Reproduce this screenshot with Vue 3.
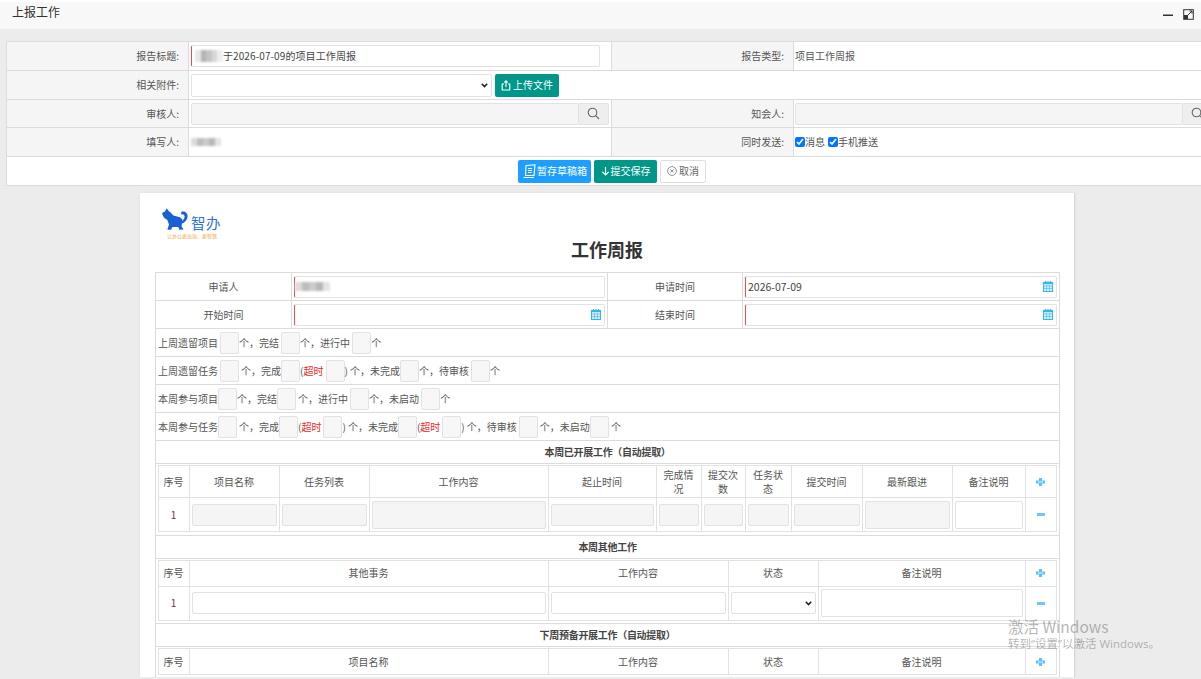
<script setup>
const countRows = [
  ['上周遗留项目 ', 0, '个，完结 ', 0, '个，进行中 ', 0, '个'],
  ['上周遗留任务 ', 0, ' 个，完成', 0, '(', 1, ' ', 0, ') 个，未完成', 0, '个，待审核 ', 0, '个'],
  ['本周参与项目', 0, '个，完结', 0, ' 个，进行中 ', 0, '个，未启动 ', 0, '个'],
  ['本周参与任务', 0, ' 个，完成', 0, '(', 1, ' ', 0, ') 个，未完成', 0, '(', 1, ' ', 0, ') 个，待审核 ', 0, ' 个，未启动', 0, ' 个']
]
const w1 = [31, 90, 90, 179, 108, 45, 44, 46, 71, 90, 73, 31]
const w2 = [31, 359, 180, 90, 207, 31]
const h1 = ['序号', '项目名称', '任务列表', '工作内容', '起止时间', '完成情况', '提交次数', '任务状态', '提交时间', '最新跟进', '备注说明']
const h2 = ['序号', '其他事务', '工作内容', '状态', '备注说明']
const h3 = ['序号', '项目名称', '工作内容', '状态', '备注说明']
const d1 = ['g', 'g', 'G', 'g', 'g', 'g', 'g', 'g', 'G', 'W']
const mosaicA = ['#e8e8e8', '#b4b4b4', '#c4c4c4', '#d8d8d8', '#eeeeee']
const mosaicB = ['#dcdcdc', '#bdbdbd', '#cbcbcb', '#b8b8b8', '#e4e4e4']
</script>

<template>
  <div class="page">
    <header class="top">
      <span class="top-title">上报工作</span>
      <span class="win">
        <svg width="10" height="3" viewBox="0 0 10 3"><rect y="0.5" width="10" height="1.5" fill="#333" /></svg>
        <svg width="11" height="11" viewBox="0 0 11 11" fill="none" stroke="#333"><rect x="0.7" y="0.7" width="9.6" height="9.6" /><path d="M5 6 9 2M6.5 2H9V4.5" /><rect x="1.5" y="6.5" width="3" height="3" fill="#333" /></svg>
      </span>
    </header>

    <table class="form">
      <colgroup><col class="c-l"><col class="c-v"><col class="c-l"><col class="c-v"></colgroup>
      <tbody>
        <tr class="r29">
          <th>报告标题:</th>
          <td>
            <div class="inp req title-inp">
              <span class="mosaic m1"><i v-for="c in mosaicA" :key="c" :style="{ background: c }"></i></span>
              <span class="title-text">于2026-07-09的项目工作周报</span>
            </div>
          </td>
          <th>报告类型:</th>
          <td class="side pad-text">项目工作周报</td>
        </tr>
        <tr class="r29">
          <th>相关附件:</th>
          <td colspan="3">
            <div class="attach">
              <select class="sel sel-file"></select>
              <button class="btn teal up">
                <svg width="10" height="11" viewBox="0 0 10 11" fill="none" stroke="#fff" stroke-width="1.1"><path d="M3 4H1.2V10H8.8V4H7M5 7V1M3.4 2.5 5 .9 6.6 2.5" /></svg>上传文件
              </button>
            </div>
          </td>
        </tr>
        <tr class="r28">
          <th>审核人:</th>
          <td>
            <div class="search">
              <div class="inp gray"></div>
              <span class="sbtn"><svg width="13" height="13" viewBox="0 0 13 13" fill="none" stroke="#666" stroke-width="1.1"><circle cx="5.5" cy="5.5" r="4.3" /><path d="M8.7 8.7 12 12" /></svg></span>
            </div>
          </td>
          <th>知会人:</th>
          <td class="side">
            <div class="search">
              <div class="inp gray"></div>
              <span class="sbtn"><svg width="13" height="13" viewBox="0 0 13 13" fill="none" stroke="#666" stroke-width="1.1"><circle cx="5.5" cy="5.5" r="4.3" /><path d="M8.7 8.7 12 12" /></svg></span>
            </div>
          </td>
        </tr>
        <tr class="r29">
          <th>填写人:</th>
          <td><span class="mosaic m2"><i v-for="c in mosaicB" :key="c" :style="{ background: c }"></i></span></td>
          <th>同时发送:</th>
          <td class="side pad-text checks">
            <label><input type="checkbox" checked>消息</label>
            <label><input type="checkbox" checked>手机推送</label>
          </td>
        </tr>
        <tr class="r29">
          <td colspan="4" class="actions-cell">
            <div class="actions">
              <button class="btn blue">
                <svg width="15" height="15" viewBox="0 0 15 15" fill="none" stroke="#fff" stroke-width="1.1"><path d="M4 1.500 13 .8 12 11.500H3.500L4 1.500ZM1.500 13.500H12M6 4.500H10M6 6.500H10M6 8.500H9.500" /></svg>暂存草稿箱
              </button>
              <button class="btn teal">
                <svg width="9" height="10" viewBox="0 0 9 10" fill="none" stroke="#fff" stroke-width="1.2"><path d="M4.5 1V9M1.3 5.8 4.5 9 7.7 5.8" /></svg>提交保存
              </button>
              <button class="btn plain">
                <svg width="10" height="10" viewBox="0 0 10 10" fill="none" stroke="#777" stroke-width=".8"><circle cx="5" cy="5" r="4.4" /><path d="M3.4 3.4 6.6 6.6M6.6 3.4 3.4 6.6" /></svg>取消
              </button>
            </div>
          </td>
        </tr>
      </tbody>
    </table>

    <main class="paper">
      <div class="logo">
        <svg width="27" height="23" viewBox="0 0 27 23" fill="#1a5fd6">
          <path d="M1 5 4 3.6 5.6.2 8.2 3.4C10 4.4 11 6 12.4 7.6L19 9.2 21.4 11.6 20.6 18.6 22.6 21.6 18.4 21.8 17.2 19H11.4L10 21.8 6.4 21.8 8 16.6 6.2 11.8C3.4 10.6 1.8 8.4 1 5Z" />
          <path d="M20.4 13.4C23.4 11.4 24.6 8.2 22.6 6.6L20 6.2 20.4 3.8C24.4 2.6 27.4 6 26.4 9.8 25.6 12.8 23.4 15 21 15.6Z" />
        </svg>
        <span class="brand-name">智办</span>
      </div>
      <div class="tagline">让办公更高效、更智慧</div>
      <h1>工作周报</h1>

      <table class="sheet">
        <colgroup><col style="width:136px"><col style="width:316px"><col style="width:135px"><col style="width:317px"></colgroup>
        <tbody>
          <tr class="s28">
            <td class="cen">申请人</td>
            <td>
              <div class="inp req">
                <span class="mosaic m3"><i v-for="c in mosaicB" :key="c" :style="{ background: c }"></i></span>
              </div>
            </td>
            <td class="cen">申请时间</td>
            <td>
              <div class="inp req date">
                <span class="date-text">2026-07-09</span>
                <svg class="cal" width="10" height="11" viewBox="0 0 10 11" fill="#cdeefd" stroke="#35b5ee"><rect x=".5" y="1.5" width="9" height="9" /><path d="M0 2.5h10M2.5 0v2M5 0v2M7.5 0v2" stroke-width="1.2" /><path d="M.5 5h9M.5 7.5h9M3.5 3.5v7M6.5 3.5v7" stroke-width=".5" /></svg>
              </div>
            </td>
          </tr>
          <tr class="s28">
            <td class="cen">开始时间</td>
            <td>
              <div class="inp req date">
                <svg class="cal" width="10" height="11" viewBox="0 0 10 11" fill="#cdeefd" stroke="#35b5ee"><rect x=".5" y="1.5" width="9" height="9" /><path d="M0 2.5h10M2.5 0v2M5 0v2M7.5 0v2" stroke-width="1.2" /><path d="M.5 5h9M.5 7.5h9M3.5 3.5v7M6.5 3.5v7" stroke-width=".5" /></svg>
              </div>
            </td>
            <td class="cen">结束时间</td>
            <td>
              <div class="inp req date">
                <svg class="cal" width="10" height="11" viewBox="0 0 10 11" fill="#cdeefd" stroke="#35b5ee"><rect x=".5" y="1.5" width="9" height="9" /><path d="M0 2.5h10M2.5 0v2M5 0v2M7.5 0v2" stroke-width="1.2" /><path d="M.5 5h9M.5 7.5h9M3.5 3.5v7M6.5 3.5v7" stroke-width=".5" /></svg>
              </div>
            </td>
          </tr>
          <tr v-for="(row, i) in countRows" :key="i" class="s28">
            <td colspan="4" class="count-cell">
              <div class="count">
                <template v-for="(seg, j) in row" :key="j">
                  <span v-if="seg === 0" class="box"></span>
                  <span v-else-if="seg === 1" class="red">超时</span>
                  <span v-else>{{ seg }}</span>
                </template>
              </div>
            </td>
          </tr>

          <tr class="s23"><td colspan="4" class="sec">本周已开展工作（自动提取）</td></tr>
          <tr>
            <td colspan="4" class="nest-cell">
              <table class="nest">
                <colgroup><col v-for="(w, i) in w1" :key="i" :style="{ width: w + 'px' }"></colgroup>
                <tbody>
                  <tr class="h32">
                    <td v-for="h in h1" :key="h" class="head">{{ h }}</td>
                    <td class="ico"><svg width="9" height="8" viewBox="0 0 9 8"><path d="M3 0h3v2.5h3v3H6V8H3V5.500H0v-3h3z" fill="#5cc0ff" /><rect x="2" y="3.300" width="5" height="1.400" fill="#bfe6ff" /></svg></td>
                  </tr>
                  <tr class="h34">
                    <td class="num">1</td>
                    <td v-for="(k, i) in d1" :key="i" class="fld">
                      <div :class="['f', k === 'W' ? 'tall white' : k === 'G' ? 'tall gray' : 'gray']"></div>
                    </td>
                    <td class="ico"><svg width="8" height="3" viewBox="0 0 8 3"><rect width="8" height="3" fill="#6cc6ff" /></svg></td>
                  </tr>
                </tbody>
              </table>
            </td>
          </tr>

          <tr class="s23"><td colspan="4" class="sec">本周其他工作</td></tr>
          <tr>
            <td colspan="4" class="nest-cell">
              <table class="nest">
                <colgroup><col v-for="(w, i) in w2" :key="i" :style="{ width: w + 'px' }"></colgroup>
                <tbody>
                  <tr class="h25">
                    <td v-for="h in h2" :key="h" class="head">{{ h }}</td>
                    <td class="ico"><svg width="9" height="8" viewBox="0 0 9 8"><path d="M3 0h3v2.5h3v3H6V8H3V5.500H0v-3h3z" fill="#5cc0ff" /><rect x="2" y="3.300" width="5" height="1.400" fill="#bfe6ff" /></svg></td>
                  </tr>
                  <tr class="h34">
                    <td class="num">1</td>
                    <td class="fld"><div class="f white"></div></td>
                    <td class="fld"><div class="f white"></div></td>
                    <td class="fld"><select class="sel f"></select></td>
                    <td class="fld"><div class="f tall white"></div></td>
                    <td class="ico"><svg width="8" height="3" viewBox="0 0 8 3"><rect width="8" height="3" fill="#6cc6ff" /></svg></td>
                  </tr>
                </tbody>
              </table>
            </td>
          </tr>

          <tr class="s23"><td colspan="4" class="sec">下周预备开展工作（自动提取）</td></tr>
          <tr>
            <td colspan="4" class="nest-cell">
              <table class="nest">
                <colgroup><col v-for="(w, i) in w2" :key="i" :style="{ width: w + 'px' }"></colgroup>
                <tbody>
                  <tr class="h25">
                    <td v-for="h in h3" :key="h" class="head">{{ h }}</td>
                    <td class="ico"><svg width="9" height="8" viewBox="0 0 9 8"><path d="M3 0h3v2.5h3v3H6V8H3V5.500H0v-3h3z" fill="#5cc0ff" /><rect x="2" y="3.300" width="5" height="1.400" fill="#bfe6ff" /></svg></td>
                  </tr>
                </tbody>
              </table>
            </td>
          </tr>
        </tbody>
      </table>
    </main>

    <div class="watermark">
      <div class="wm1">激活 Windows</div>
      <div class="wm2">转到“设置”以激活 Windows。</div>
    </div>
  </div>
</template>

<style>
html, body { margin: 0; background: #ececec; overflow: hidden; }
</style>

<style scoped>
.page {
  position: relative;
  width: 1201px;
  height: 677px;
  overflow: hidden;
  background: #ececec;
  font: 10px/14px "Noto Sans CJK SC", "Noto Sans", sans-serif;
  color: #555;
}
.top {
  height: 27px;
  border-top: 2px solid #fff;
  background: #f8f8f8;
  display: flex;
  justify-content: space-between;
  padding: 0 7px 0 12px;
}
.top-title { font-size: 12px; line-height: 19px; color: #333; }
.win { display: flex; align-items: flex-start; gap: 10px; padding-top: 7px; }
.win svg:first-child { margin-top: 5px; }

table { border-collapse: collapse; table-layout: fixed; }
td, th { padding: 0; box-sizing: border-box; }

.form {
  margin: 12px 0 0 6px;
  width: 1210px;
  background: #fff;
  border: 1px solid #dcdcdc;
}
.form td, .form th { border: 1px solid #dcdcdc; }
.c-l { width: 182px; }
.c-v { width: 423px; }
.r29 { height: 29px; }
.r28 { height: 28px; }
.form th {
  background: #f5f5f5;
  font-weight: 400;
  text-align: right;
  padding-right: 9px;
}
.form td { padding-left: 2px; padding-right: 2px; }
.form td.side { padding-left: 1px; }

.inp {
  box-sizing: border-box;
  height: 22px;
  border: 1px solid #e2e2e2;
  border-radius: 2px;
  background: #fff;
  display: flex;
  align-items: center;
  padding-left: 3px;
  color: #444;
}
.req { border-left: 1px solid #f0494f; }
.title-inp { width: 409px; }
.title-text { letter-spacing: .1px; }
.gray { background: #f5f5f5; }
.date { justify-content: space-between; padding-right: 3px; }
.date-text { font-size: 10.500px; margin-left: -1px; }
.cal { margin-left: auto; }

.mosaic { display: inline-flex; filter: blur(1.2px); }
.mosaic i { display: block; height: 9px; }
.m1 i { width: 5.600px; height: 12px; }
.m2 i { width: 6px; height: 8px; }
.m3 { margin-left: -3px; }
.m3 i { width: 7px; height: 9px; }

.attach { display: flex; gap: 3px; align-items: center; }
.sel {
  box-sizing: border-box;
  height: 23px;
  border: 1px solid #e2e2e2;
  border-radius: 2px;
  font: inherit;
  appearance: none;
  background: #fff url("data:image/svg+xml,%3Csvg xmlns='http://www.w3.org/2000/svg' width='7' height='5' viewBox='0 0 7 5'%3E%3Cpath d='M.8.8 3.500 3.500 6.200.8' fill='none' stroke='%23222' stroke-width='1.600'/%3E%3C/svg%3E") no-repeat right 3px center;
}
.sel-file { width: 301px; }

.btn {
  height: 23px;
  border: 0;
  border-radius: 2px;
  font: inherit;
  display: inline-flex;
  align-items: center;
  justify-content: center;
  gap: 1px;
  padding: 0;
  color: #fff;
}
.teal { background: #009688; width: 63px; }
.up { width: 64px; gap: 2px; }
.blue { background: #1e9fff; width: 73px; gap: 0; }
.plain { background: #fff; border: 1px solid #dedede; color: #666; width: 46px; gap: 2px; }
.actions { display: flex; gap: 3px; box-sizing: border-box; padding-left: 509px; }
.actions-cell { background: #fff; }

.search { display: flex; width: 418px; height: 22px; }
.search .inp { width: 388px; flex: none; }
.sbtn {
  flex: none;
  width: 30px;
  box-sizing: border-box;
  border: 1px solid #e2e2e2;
  border-left: 0;
  background: #eee;
  display: flex;
  align-items: center;
  justify-content: center;
  border-radius: 0 2px 2px 0;
}

.checks label { display: inline-flex; align-items: center; margin-right: 3px; }
.checks input { width: 10px; height: 10px; margin: 0; }

.paper {
  margin: 7px 0 0 140px;
  width: 935px;
  height: 600px;
  box-sizing: border-box;
  background: #fff;
  border-right: 1px solid #d6d6d6;
  box-shadow: 0 0 3px rgba(0, 0, 0, .06);
  padding: 16px 0 0 15px;
}
.logo { display: flex; align-items: flex-end; gap: 3px; margin-left: 6px; height: 22px; }
.brand-name { font-size: 14.500px; line-height: 16px; color: #2f74d8; letter-spacing: .5px; }
.tagline { font-size: 5px; line-height: 5px; color: #f5a83b; margin: 2px 0 0 12px; white-space: nowrap; }
h1 {
  margin: 0 0 12px;
  font-size: 18px;
  line-height: 22px;
  font-weight: 700;
  text-align: center;
  color: #333;
  width: 904px;
}

.sheet { width: 904px; border: 1px solid #dcdcdc; }
.sheet > tbody > tr > td { border: 1px solid #dcdcdc; }
.s28 { height: 28px; }
.s23 { height: 23px; }
.cen { text-align: center; }
.sheet .inp { margin: 0 2px; }
.count-cell { padding-left: 2px; }
.count { display: flex; align-items: center; white-space: pre; word-spacing: -.2px; }
.box {
  box-sizing: border-box;
  width: 19px;
  height: 22px;
  border: 1px solid #e2e2e2;
  border-radius: 2px;
  background: #f7f7f7;
  flex: none;
}
.red { color: #ee2b2b; }
.sec { text-align: center; font-weight: 700; color: #444; letter-spacing: -.3px; }
.nest-cell { padding: 1px 1.500px 2.500px; }
.nest { width: 898px; }
.nest td { border: 1px solid #e2e2e2; text-align: center; }
.h32 { height: 32px; }
.h34 { height: 34px; }
.h25 { height: 26px; }
.head { padding: 0 5px; line-height: 14px; }
.num { color: #7b2a55; }
.fld { padding: 0 2px; }
.f {
  box-sizing: border-box;
  display: block;
  width: 100%;
  height: 22px;
  border: 1px solid #e2e2e2;
  border-radius: 2px;
  margin: 0 auto;
}
.f.tall { height: 28px; }
.f.white { background: #fff; }
.f.gray { background: #f5f5f5; }
.ico svg { display: block; margin: 0 auto; }

.watermark {
  position: absolute;
  left: 1008px;
  top: 616px;
  color: rgba(120, 120, 120, .55);
  white-space: nowrap;
}
.wm1 { font-size: 15.500px; line-height: 20px; }
.wm2 { font: 11.500px/16px "Open Sans", "Noto Sans CJK SC", sans-serif; }
</style>
